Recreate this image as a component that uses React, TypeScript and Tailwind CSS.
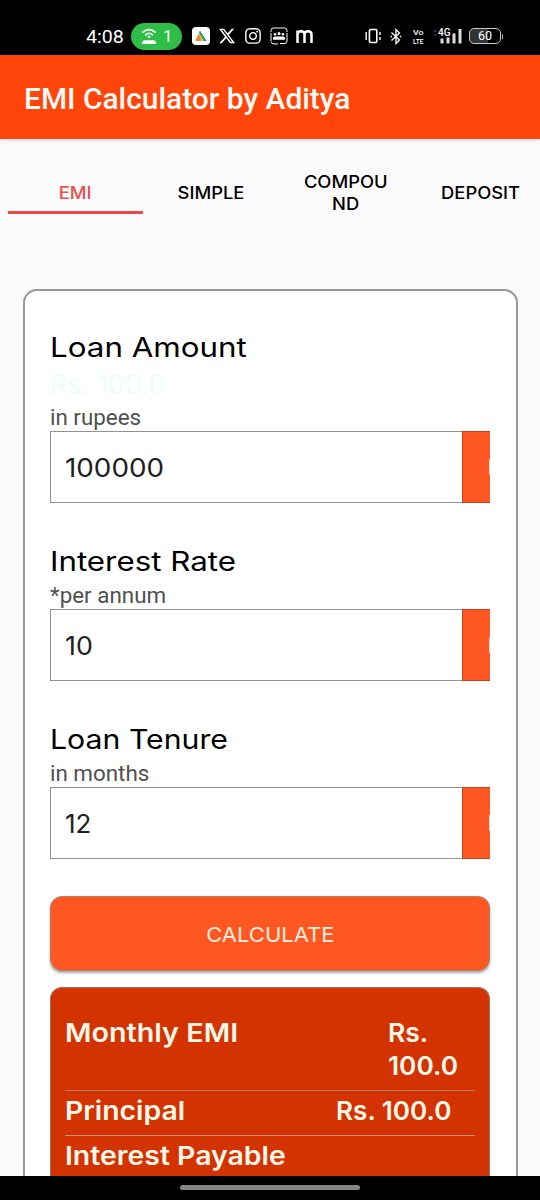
import { ReactNode } from "react";
import { FaXTwitter, FaInstagram } from "react-icons/fa6";

function StatusBar() {
  return (
    <div className="flex h-[55px] shrink-0 items-center bg-black pt-[17px] pl-[86px] text-white">
      <span className="w-[45px] font-['Roboto'] text-[19px] leading-none">
        <Wide className="origin-left scale-x-[1.03]">4:08</Wide>
      </span>
      <div className="flex h-[27px] w-[51px] items-center rounded-full bg-[#2ebd46] pl-[10px]">
        <svg width="16" height="18" viewBox="0 0 16 18" fill="none" stroke="white" strokeWidth="1.7" strokeLinecap="round">
          <path d="M2 5.2C5.5 1.8 10.5 1.8 14 5.2M4.600 7.800C6.500 6 9.500 6 11.400 7.800" />
          <circle cx="8" cy="9.800" r="1" fill="white" strokeWidth="0.8" />
          <path d="M3 14.200h10l1.400 1.800H1.600z" fill="white" strokeLinejoin="round" strokeWidth="1.800" />
        </svg>
        <span className="ml-[6px] font-['Roboto'] text-[17px] leading-none">1</span>
      </div>
      <svg className="ml-[10px]" width="18" height="18" viewBox="0 0 18 18">
        <rect width="18" height="18" rx="4" fill="white" />
        <path d="M8 3.500l6.500 10.500h-3L7 6z" fill="#2a9d63" />
        <path d="M6.700 6.200L11 14H2.800z" fill="#f3a63b" />
        <path d="M5 10.200L7.500 14M7 8l1 6M4 12l2 2" stroke="#c86a2a" strokeWidth=".6" />
      </svg>
      <FaXTwitter className="ml-[8px] size-[18px]" />
      <FaInstagram className="ml-[8px] size-[18px]" />
      <svg className="ml-[8px]" width="18" height="18" viewBox="0 0 18 18" fill="none" stroke="white" strokeWidth="1">
        <path d="M1 5V3.500Q1 1 3.500 1H14.500Q17 1 17 3.500V5M1 6v8M17 6v8M1 14.500Q1.500 17 4 17h4M10 16.500h5Q17 16 17 14" />
        <g fill="white" stroke="none">
          <circle cx="5" cy="7.300" r="1.300" />
          <circle cx="9" cy="6.500" r="1.500" />
          <circle cx="13" cy="7.300" r="1.300" />
          <path d="M3 12.700V11q0-1.500 2-1.500h8q2 0 2 1.500v1.700z" />
        </g>
      </svg>
      <svg className="ml-[8px]" width="17" height="14" viewBox="0 0 17 14" fill="none" stroke="white" strokeWidth="2.500">
        <path d="M1.500 14V1.500M1.500 14V5.500Q1.500 2.200 5 2.200T8.500 5.500V14M8.500 14V5.500Q8.500 2.200 12 2.200T15.500 5.500V14" />
      </svg>
      <svg className="ml-[52px]" width="16" height="16" viewBox="0 0 16 16" fill="none" stroke="white" strokeWidth="1.600">
        <rect x="4.400" y="1.500" width="7.400" height="13" rx="1.200" />
        <path d="M1.200 4v8M15 4v3M15 9v3" strokeWidth="1.400" />
      </svg>
      <svg className="ml-[9px]" width="12" height="17" viewBox="0 0 12 17" fill="none" stroke="white" strokeWidth="1.300">
        <path d="M1.500 4.500l8 7.500L6 15.500v-14L9.500 5l-8 7.500" />
        <path d="M.5 8.500h1.500M9.800 8.500h1.500" />
      </svg>
      <svg className="ml-[10px]" width="13" height="20" viewBox="0 0 13 20" fill="white" fontFamily="Roboto" fontWeight="500">
        <text x="1" y="8.500" fontSize="7.800" textLength="10.500" lengthAdjust="spacingAndGlyphs">Vo</text>
        <text x="1" y="17.500" fontSize="7.800" textLength="10.500" lengthAdjust="spacingAndGlyphs">LTE</text>
      </svg>
      <svg className="ml-[7px]" width="31" height="18" viewBox="0 0 31 18">
        <path d="M1 5l2-3 2 3zM1 7l2 3 2-3z" fill="#333" />
        <g fill="#ddd">
          <rect x="8.500" y="11.500" width="3" height="5" />
          <rect x="14.500" y="10.500" width="3" height="6" />
          <rect x="20.500" y="6.500" width="3" height="10" />
          <rect x="26.500" y="2" width="3" height="14.500" />
        </g>
        <text x="6" y="9" fill="white" fontFamily="Roboto" fontWeight="500" fontSize="10">4G</text>
      </svg>
      <div className="ml-[6px] flex h-[16px] w-[32px] items-center justify-center rounded-[5px] border border-[#c8c8c8] bg-[linear-gradient(90deg,#333_60%,#000_60%)] font-['Roboto'] text-[12.5px] leading-none">
        60
      </div>
      <div className="ml-px h-[5px] w-[1px] rounded-r bg-[#bbb]" />
    </div>
  );
}

function Wide({ children, className = "" }: { children: ReactNode; className?: string }) {
  return <span className={`inline-block whitespace-nowrap ${className}`}>{children}</span>;
}

const tabs = [
  { label: ["EMI"], active: true },
  { label: ["SIMPLE"], active: false },
  { label: ["COMPOU", "ND"], active: false },
  { label: ["DEPOSIT"], active: false },
];

function Tabs() {
  return (
    <div className="mt-[30px] ml-[7.5px] flex h-[45px] w-[540px] shrink-0 text-[17px] leading-[22px] font-medium">
      {tabs.map((t) => (
        <div
          key={t.label[0]}
          className={`flex w-[135px] shrink-0 flex-col items-center justify-center border-b-[3px] pt-[5px] ${
            t.active ? "border-[#ec4a48] text-[#f04d4b]" : "border-transparent text-black"
          }`}
        >
          {t.label.map((line) => (
            <Wide key={line} className="ml-px scale-x-[1.08]">{line}</Wide>
          ))}
        </div>
      ))}
    </div>
  );
}

function Field({ title, titleScale, amount, caption, value, valueScale, className }: {
  title: string;
  titleScale: string;
  amount?: string;
  caption: string;
  value: string;
  valueScale: string;
  className: string;
}) {
  return (
    <div className={className}>
      <div className="mb-[3px] h-[34px] text-[27px] leading-[34px] text-black">
        <Wide className={`origin-left ${titleScale}`}>{title}</Wide>
      </div>
      {amount && (
        <div className="h-[36px] text-[27px] leading-[34px] text-[#effdf8]">
          <Wide className="origin-left">{amount}</Wide>
        </div>
      )}
      <div className="h-[27px] font-['Roboto'] text-[22.5px] leading-[26px] text-[#505050]">
        <Wide className="origin-left scale-x-[0.995]">{caption}</Wide>
      </div>
      <div className="flex h-[72px]">
        <div className="flex flex-1 items-center border border-r-0 border-[#929292] bg-white pt-px pl-[14px] text-[26px] text-[#202020]">
          <Wide className={`origin-left ${valueScale}`}>{value}</Wide>
        </div>
        <div className="flex w-[28px] items-center justify-end border border-r-0 border-[#c6441c] bg-[#ff5722]">
          <div className="h-[16px] w-px rounded-l bg-[#ffd9cc]" />
        </div>
      </div>
    </div>
  );
}

export default function App() {
  return (
    <div className="flex h-[1200px] w-[540px] flex-col overflow-hidden bg-[#fafafa] font-['Inter',sans-serif]">
      <StatusBar />
      <header className="flex h-[84px] shrink-0 items-center bg-[#ff450a] pt-[2px] pl-[24px] font-['Roboto'] text-[30px] font-medium text-[#fffaf5] shadow-[0_1px_4px_rgba(0,0,0,0.15)]">
        <Wide className="origin-left scale-x-[0.997]">EMI Calculator by Aditya</Wide>
      </header>
      <Tabs />
      <main className="mx-[22.5px] mt-[75px] flex min-h-0 flex-1 flex-col overflow-hidden rounded-t-[14px] border-2 border-b-0 border-[#999] bg-white px-[25.5px]">
        <Field title="Loan Amount" titleScale="scale-x-[1.16]" amount="Rs. 100.0" caption="in rupees" value="100000" valueScale="scale-x-[1.07]" className="mt-[40px]" />
        <Field title="Interest Rate" titleScale="scale-x-[1.16]" caption="*per annum" value="10" valueScale="scale-x-[1.03]" className="mt-[42px]" />
        <Field title="Loan Tenure" titleScale="scale-x-[1.12]" caption="in months" value="12" valueScale="scale-x-[1]" className="mt-[42px]" />
        <button className="mt-[37px] flex h-[75px] shrink-0 items-center justify-center rounded-[12px] border border-[#b27e6c] bg-[#ff5722] pt-[3px] text-[20px] text-[#fff0df] shadow-[0_2px_3px_rgba(0,0,0,0.35)]">
          <Wide className="scale-x-[1.10]">CALCULATE</Wide>
        </button>
        <section className="mt-[16px] flex-1 rounded-t-[12px] border border-b-0 border-[#a2725f] bg-[#d33301] px-[14px] text-[26px] leading-[33px] font-semibold text-[#fff8e9]">
          <div className="flex h-[103px] border-b border-[#b87b65] pt-[28px]">
            <div className="w-[323px]"><Wide className="origin-left scale-x-[1.105]">Monthly EMI</Wide></div>
            <div>
              <div><Wide className="origin-left scale-x-[1.02]">Rs.</Wide></div>
              <div><Wide className="origin-left scale-x-[1.01]">100.0</Wide></div>
            </div>
          </div>
          <div className="flex h-[45px] border-b border-[#c5917e] pt-[3px]">
            <div className="w-[271px]"><Wide className="origin-left scale-x-[1.09]">Principal</Wide></div>
            <Wide className="origin-left scale-x-[1.005]">Rs. 100.0</Wide>
          </div>
          <div className="pt-[3px]"><Wide className="origin-left scale-x-[1.093]">Interest Payable</Wide></div>
        </section>
      </main>
      <nav className="flex h-[24px] shrink-0 justify-center bg-black pt-[9px]">
        <div className="h-[5px] w-[180px] rounded-full bg-[#858585]" />
      </nav>
    </div>
  );
}
